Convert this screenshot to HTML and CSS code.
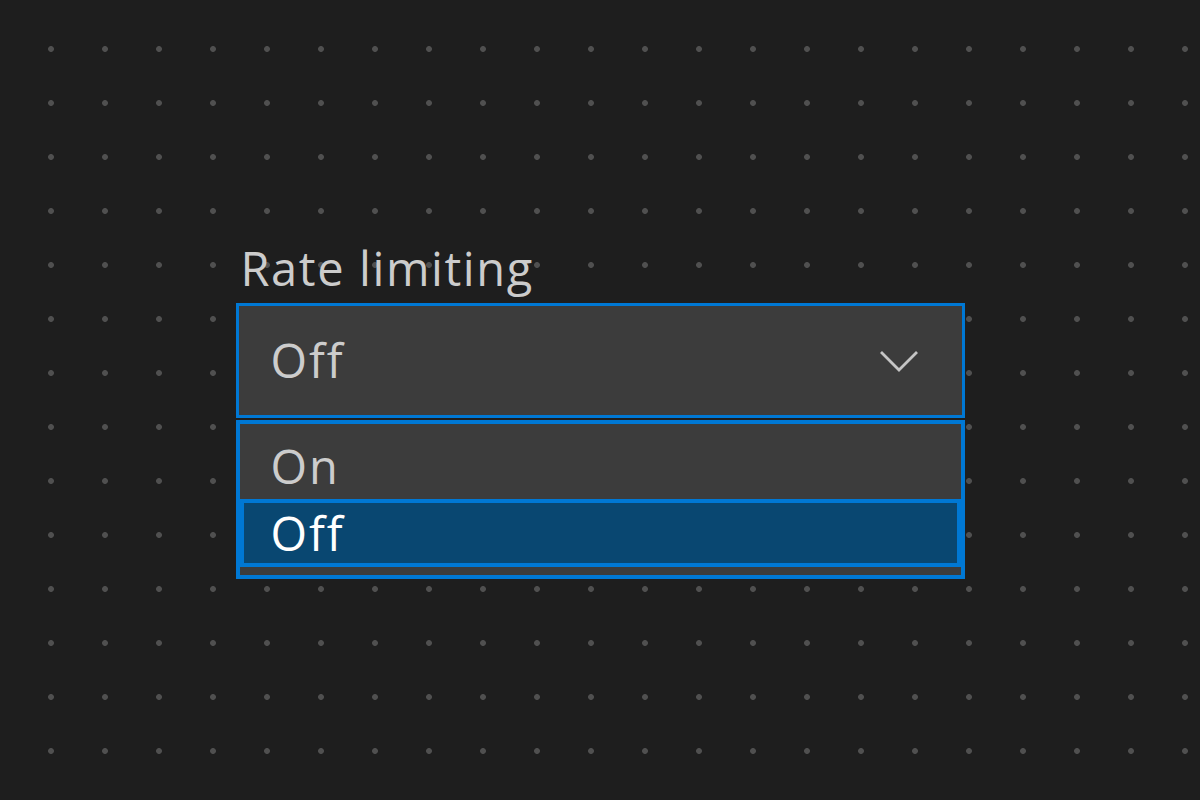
FILE: index.html
```html
<!DOCTYPE html>
<html lang="en">
<head>
<meta charset="utf-8">
<title>Rate limiting</title>
<link rel="stylesheet" href="styles.css">
</head>
<body>
<main class="canvas">
  <div class="field">
    <label class="field-label">Rate limiting</label>
    <div class="select">
      <span class="select-value">Off</span>
      <svg class="chevron" width="40" height="22" viewBox="0 0 40 22" aria-hidden="true">
        <polyline points="2,2 20,20 38,2" fill="none" stroke="#c5c5c5" stroke-width="2.8" stroke-linecap="butt" stroke-linejoin="miter"/>
      </svg>
    </div>
    <ul class="options">
      <li class="option">On</li>
      <li class="option option-selected">Off</li>
    </ul>
  </div>
</main>
</body>
</html>
```
FILE: styles.css
```css
html, body {
  margin: 0;
  padding: 0;
}
body {
  width: 1200px;
  height: 800px;
  background-color: #1e1e1e;
  background-image: radial-gradient(circle, #505050 0, #505050 2.5px, rgba(80,80,80,0) 3.3px);
  background-size: 54px 54px;
  background-position: 24px 22px;
  font-family: "Open Sans", "Noto Sans", sans-serif;
  overflow: hidden;
}
.canvas {
  display: flex;
  justify-content: center;
  padding-top: 240px;
}
.field {
  width: 729px;
  display: flex;
  flex-direction: column;
}
.field-label {
  font-size: 47px;
  letter-spacing: 1.6px;
  line-height: 56px;
  color: #cccccc;
  padding-left: 5px;
  margin-bottom: 7px;
}
.select {
  box-sizing: border-box;
  height: 115px;
  border: 3px solid #0078d4;
  background: #3c3c3c;
  display: flex;
  align-items: center;
  justify-content: space-between;
  padding: 0 43px 0 32px;
}
.select-value {
  font-size: 47px;
  letter-spacing: 2px;
  color: #cccccc;
  line-height: 1;
}
.chevron {
  display: block;
}
.options {
  list-style: none;
  margin: 2px 0 0;
  padding: 0 0 8px;
  border: 4px solid #0078d4;
  background: #3c3c3c;
}
.option {
  box-sizing: border-box;
  font-size: 47px;
  letter-spacing: 2px;
  color: #cccccc;
  padding-left: 31px;
}
.option:first-child {
  height: 75px;
  line-height: 65px;
  padding-top: 10px;
}
.option-selected {
  height: 68px;
  line-height: 60px;
  border: 4px solid #0078d4;
  background: #094771;
  color: #ffffff;
  padding-left: 27px;
}
```
